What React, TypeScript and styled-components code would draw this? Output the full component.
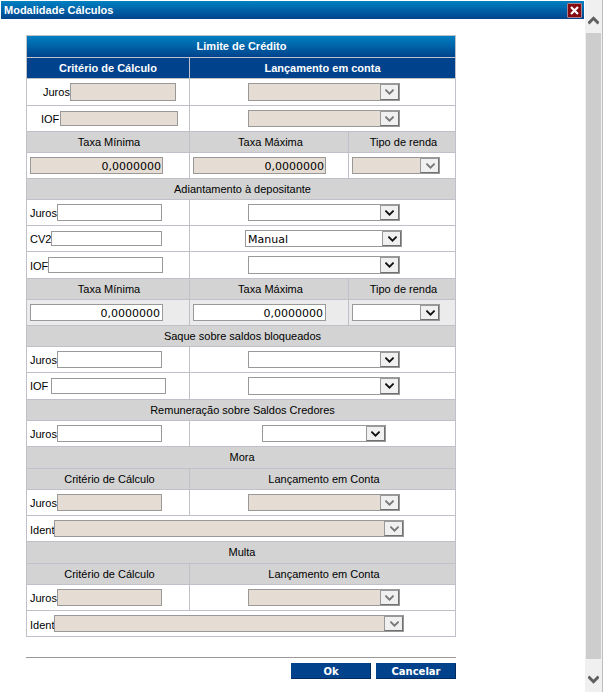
import React from 'react';
import styled, { createGlobalStyle } from 'styled-components';

const GlobalStyle = createGlobalStyle`
  * { box-sizing: border-box; }
  body { margin: 0; background: #fff; overflow: hidden; }
`;

const Window = styled.div`
  display: flex;
  width: 603px;
  height: 692px;
  overflow: hidden;
  background: #fff;
  font: 11px/13px 'Liberation Sans', Arial, sans-serif;
  color: #000;
`;

const Main = styled.main`
  width: 585px;
  padding: 1px 1px 0;
`;

const TitleBar = styled.header`
  display: flex;
  align-items: center;
  justify-content: space-between;
  height: 18px;
  padding: 0 3px;
  background: linear-gradient(#0080c2, #00438c);
  color: #fff;
  font-weight: bold;
`;

const CloseButton = styled.button`
  display: grid;
  place-items: center;
  width: 15px;
  height: 15px;
  margin-right: -1px;
  padding: 0;
  border: 1px solid #a8838f;
  border-radius: 1px;
  background: #860c12;
`;

const Form = styled.form`
  width: 430px;
  margin: 16px 0 0 25px;
`;

const Table = styled.section`
  border: 1px solid #c0c0c8;
  border-bottom: 0;
`;

type Tone = 'title' | 'head' | 'group' | 'tint' | 'plain';
const tones: Record<Tone, string> = {
  title: 'linear-gradient(#0080c2, #00438c)',
  head: '#00438c',
  group: '#d3d3d3',
  tint: '#ebebeb',
  plain: '#fff',
};

const Row = styled.div<{ $h: number; $tone: Tone; $cols?: string }>`
  display: grid;
  grid-template-columns: ${p => p.$cols || '1fr'};
  height: ${p => p.$h}px;
  border-bottom: 1px solid #c0c0c8;
  background: ${p => tones[p.$tone]};
  color: ${p => (p.$tone === 'title' || p.$tone === 'head' ? '#fff' : '#000')};
  font-weight: ${p => (p.$tone === 'title' || p.$tone === 'head' ? 'bold' : 'normal')};
`;

const HeadCell = styled.div<{ $shift?: number }>`
  display: flex;
  align-items: center;
  justify-content: center;
  padding-left: ${p => p.$shift ?? 2}px;
  white-space: nowrap;
  & + & { border-left: 1px solid #c0c0c8; }
`;

const Cell = styled.div<{ $left?: number }>`
  display: flex;
  align-items: flex-start;
  padding: 4px 0 0 ${p => p.$left ?? 3}px;
  & + & { border-left: 1px solid #c0c0c8; }
`;

const Label = styled.label<{ $w: number; $top?: number }>`
  flex: none;
  width: ${p => p.$w}px;
  margin-top: ${p => p.$top ?? 3}px;
  white-space: nowrap;
`;

const Field = styled.input<{ $w: number; $h?: number; $top?: number; $end?: number }>`
  flex: none;
  width: ${p => p.$w}px;
  height: ${p => p.$h || 17}px;
  margin: ${p => p.$top || 0}px 0 0;
  padding: 1px ${p => p.$end ?? 2}px 0 0;
  border: 1px solid #999;
  border-radius: 0;
  outline: 0;
  background: #fff;
  color: #000;
  font: 11px/13px 'DejaVu Sans', Verdana, sans-serif;
  text-align: right;
  &:disabled { background: #e5dcd3; }
`;

const SelectBox = styled.div<{ $w: number; $h: number; $off?: boolean }>`
  display: flex;
  flex: none;
  justify-content: space-between;
  width: ${p => p.$w}px;
  height: ${p => p.$h}px;
  border: 1px solid #999;
  background: ${p => (p.$off ? '#e5dcd3' : '#fff')};
  font: 11px/15px 'DejaVu Sans', Verdana, sans-serif;
`;

const SelectValue = styled.span`
  padding: 1px 0 0 2px;
`;

const SelectArrow = styled.span<{ $pad: number }>`
  display: flex;
  align-items: center;
  width: 19px;
  padding-left: ${p => p.$pad}px;
  border: 1px solid #999;
  border-right-color: #707070;
  border-bottom-color: #707070;
  background: #f0f0f0;
`;

const Actions = styled.footer`
  display: flex;
  justify-content: flex-end;
  gap: 5px;
  margin-top: 20px;
  padding-top: 5px;
  border-top: 1px solid #999;
`;

const ActionButton = styled.button`
  width: 80px;
  height: 16px;
  padding: 1px 0 0;
  border: 1px solid #00438c;
  border-right-color: #002a5c;
  border-bottom-color: #002a5c;
  background: #00438c;
  color: #fff;
  font: bold 10px/14px 'DejaVu Sans', Verdana, sans-serif;
`;

const ScrollBar = styled.aside`
  display: flex;
  flex-direction: column;
  align-items: center;
  width: 18px;
  background: #f0f0f0;
  border-right: 1px solid #bdbdbd;
`;

const ScrollArrow = styled.div<{ $h: number; $top: number }>`
  height: ${p => p.$h}px;
  padding-top: ${p => p.$top}px;
  svg { display: block; }
`;

const Thumb = styled.div`
  width: 15px;
  height: 626px;
  background: #cdcdcd;
`;

function Select({ w = 152, h = 17, off, pad = 4, value = '' }: {
  w?: number; h?: number; off?: boolean; pad?: number; value?: string;
}) {
  return (
    <SelectBox $w={w} $h={h} $off={off}>
      <SelectValue>{value}</SelectValue>
      <SelectArrow $pad={pad}>
        <svg width="9" height="6" viewBox="0 0 9 6">
          <path d="M.4.6 4.5 4.7 8.6.6" fill="none" stroke={off ? '#777' : '#111'} strokeWidth="1.8" />
        </svg>
      </SelectArrow>
    </SelectBox>
  );
}

const two = '162px 1fr';
const three = '162px 159px 1fr';

function RateRows({ off }: { off?: boolean }) {
  return (
    <>
      <Row $h={21} $tone="group" $cols={three}>
        <HeadCell>Taxa Mínima</HeadCell>
        <HeadCell $shift={3}>Taxa Máxima</HeadCell>
        <HeadCell $shift={3}>Tipo de renda</HeadCell>
      </Row>
      <Row $h={26} $tone={off ? 'plain' : 'tint'} $cols={three}>
        <Cell><Field $w={133} $end={off ? 1 : 2} disabled={off} defaultValue="0,0000000" /></Cell>
        <Cell><Field $w={133} $end={off ? 1 : 2} disabled={off} defaultValue="0,0000000" /></Cell>
        <Cell><Select w={88} off={off} pad={5} /></Cell>
      </Row>
    </>
  );
}

function PenaltyRows({ title }: { title: string }) {
  return (
    <>
      <Row $h={22} $tone="group"><HeadCell>{title}</HeadCell></Row>
      <Row $h={21} $tone="group" $cols={two}>
        <HeadCell $shift={3}>Critério de Cálculo</HeadCell>
        <HeadCell $shift={3}>Lançamento em Conta</HeadCell>
      </Row>
      <Row $h={26} $tone="plain" $cols={two}>
        <Cell><Label $w={27}>Juros</Label><Field $w={105} disabled /></Cell>
        <Cell $left={58}><Select off /></Cell>
      </Row>
      <Row $h={26} $tone="plain">
        <Cell><Label $w={24} $top={4}>Ident</Label><Select w={350} off pad={5} /></Cell>
      </Row>
    </>
  );
}

export default function App() {
  return (
    <Window>
      <GlobalStyle />
      <Main>
        <TitleBar>
          Modalidade Cálculos
          <CloseButton aria-label="Fechar">
            <svg width="9" height="9" viewBox="0 0 9 9">
              <path d="m1 1 7 7M8 1 1 8" stroke="#fff" strokeWidth="2.2" />
            </svg>
          </CloseButton>
        </TitleBar>
        <Form onSubmit={e => e.preventDefault()}>
          <Table>
            <Row $h={22} $tone="title"><HeadCell $shift={1}>Limite de Crédito</HeadCell></Row>
            <Row $h={21} $tone="head" $cols={two}>
              <HeadCell $shift={0}>Critério de Cálculo</HeadCell>
              <HeadCell $shift={0}>Lançamento em conta</HeadCell>
            </Row>
            <Row $h={27} $tone="plain" $cols={two}>
              <Cell $left={16}><Label $w={27}>Juros</Label><Field $w={106} $h={18} disabled /></Cell>
              <Cell $left={58}><Select h={18} off /></Cell>
            </Row>
            <Row $h={26} $tone="plain" $cols={two}>
              <Cell $left={14}><Label $w={19}>IOF</Label><Field $w={118} $h={15} $top={1} disabled /></Cell>
              <Cell $left={58}><Select off /></Cell>
            </Row>
            <RateRows off />
            <Row $h={21} $tone="group"><HeadCell $shift={3}>Adiantamento à depositante</HeadCell></Row>
            <Row $h={26} $tone="plain" $cols={two}>
              <Cell><Label $w={27}>Juros</Label><Field $w={105} /></Cell>
              <Cell $left={58}><Select /></Cell>
            </Row>
            <Row $h={26} $tone="plain" $cols={two}>
              <Cell><Label $w={21}>CV2</Label><Field $w={111} $h={15} $top={1} /></Cell>
              <Cell $left={55}><Select w={157} pad={5} value="Manual" /></Cell>
            </Row>
            <Row $h={27} $tone="plain" $cols={two}>
              <Cell><Label $w={18} $top={4}>IOF</Label><Field $w={115} $h={16} $top={1} /></Cell>
              <Cell $left={58}><Select h={18} /></Cell>
            </Row>
            <RateRows />
            <Row $h={21} $tone="group"><HeadCell $shift={3}>Saque sobre saldos bloqueados</HeadCell></Row>
            <Row $h={26} $tone="plain" $cols={two}>
              <Cell><Label $w={27}>Juros</Label><Field $w={105} /></Cell>
              <Cell $left={58}><Select /></Cell>
            </Row>
            <Row $h={27} $tone="plain" $cols={two}>
              <Cell><Label $w={21}>IOF</Label><Field $w={115} $h={16} $top={1} /></Cell>
              <Cell $left={58}><Select h={18} /></Cell>
            </Row>
            <Row $h={21} $tone="group"><HeadCell $shift={3}>Remuneração sobre Saldos Credores</HeadCell></Row>
            <Row $h={26} $tone="plain" $cols={two}>
              <Cell><Label $w={27}>Juros</Label><Field $w={105} /></Cell>
              <Cell $left={72}><Select w={124} /></Cell>
            </Row>
            <PenaltyRows title="Mora" />
            <PenaltyRows title="Multa" />
          </Table>
          <Actions>
            <ActionButton type="submit">Ok</ActionButton>
            <ActionButton type="button">Cancelar</ActionButton>
          </Actions>
        </Form>
      </Main>
      <ScrollBar>
        <ScrollArrow $h={33} $top={16}>
          <svg width="11" height="9" viewBox="0 0 11 9">
            <path d="M.4 7.4 5.5 2.3 10.6 7.4" fill="none" stroke="#606060" strokeWidth="3" />
          </svg>
        </ScrollArrow>
        <Thumb />
        <ScrollArrow $h={33} $top={16}>
          <svg width="11" height="9" viewBox="0 0 11 9">
            <path d="M.4 1.6 5.5 6.7 10.6 1.6" fill="none" stroke="#606060" strokeWidth="3" />
          </svg>
        </ScrollArrow>
      </ScrollBar>
    </Window>
  );
}
